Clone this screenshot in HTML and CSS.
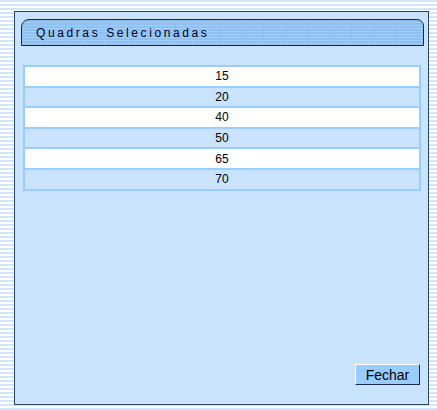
FILE: index.html
```html
<!DOCTYPE html>
<html>
<head>
<meta charset="utf-8">
<link rel="stylesheet" href="styles.css">
</head>
<body>
<div class="page">
  <div class="panel">
    <div class="titlebar"><span class="title">Quadras Selecionadas</span></div>
    <table class="list">
      <tr class="odd"><td>15</td></tr>
      <tr class="even"><td>20</td></tr>
      <tr class="odd"><td>40</td></tr>
      <tr class="even"><td>50</td></tr>
      <tr class="odd"><td>65</td></tr>
      <tr class="even"><td>70</td></tr>
    </table>
    <div class="actions"><button class="btn">Fechar</button></div>
  </div>
</div>
</body>
</html>
```
FILE: styles.css
```css
html, body {
  margin: 0;
  padding: 0;
}
body {
  width: 437px;
  height: 410px;
  overflow: hidden;
  background: repeating-linear-gradient(to bottom, #d3e6f9 0, #d3e6f9 2px, #ffffff 2px, #ffffff 4px);
  font-family: "Liberation Sans", Arial, sans-serif;
}
.page {
  padding: 11px 0 0 14px;
}
.panel {
  box-sizing: border-box;
  width: 415px;
  height: 394px;
  border: 1px solid #2a4560;
  background: #c9e3fc;
  display: flex;
  flex-direction: column;
  padding: 7px 4px 19px 6px;
}
.titlebar {
  box-sizing: border-box;
  height: 27px;
  border: 1px solid #1a2a3e;
  border-radius: 8px 7px 0 0;
  background:
    repeating-linear-gradient(to right, transparent 0, transparent 21px, rgba(120,160,210,0.18) 21px, rgba(120,160,210,0.18) 22px),
    repeating-linear-gradient(to bottom, #8fc0f2 0, #8fc0f2 2px, #a3cdf6 2px, #a3cdf6 3px);
  display: flex;
  align-items: center;
  padding-left: 14px;
}
.title {
  font-size: 12px;
  letter-spacing: 2.6px;
  color: #000022;
}
.list {
  margin: 19px 0 0 2px;
  width: 398px;
  border-collapse: separate;
  border-spacing: 2px;
  background: #99ccff;
}
.list td {
  height: 18.6px;
  padding: 0;
  text-align: center;
  font-size: 12px;
  color: #000;
}
.odd td {
  background: #ffffff;
}
.even td {
  background: #c9e3fc;
}
.actions {
  margin-top: auto;
  display: flex;
  justify-content: flex-end;
  padding-right: 4px;
}
.btn {
  box-sizing: border-box;
  width: 65px;
  height: 21px;
  background: #99ccff;
  border: 1px solid;
  border-color: #ffffff #1a2a50 #1a2a50 #ffffff;
  font-family: "Liberation Sans", Arial, sans-serif;
  font-size: 14px;
  color: #000;
  padding: 0;
}
```
